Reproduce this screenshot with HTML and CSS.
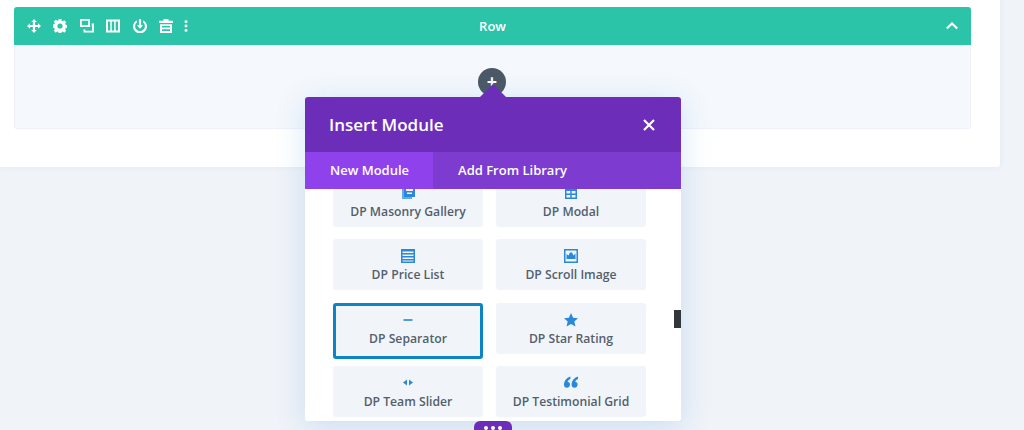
FILE: index.html
```html
<!doctype html>
<html>
<head>
  <meta charset="UTF-8">
  <meta name="viewport" content="width=device-width, initial-scale=1.0">
  <link rel="stylesheet" href="styles.css">
</head>
<body>
  <div class="section">
    <div class="row">
      <div class="row-header">
        <div class="row-tools">
          <svg class="tool" viewBox="1 1 14 14"><path d="M8 1l2.800 3H9.100v2.900H12V5.200L15 8l-3 2.800V9.100H9.100V12h1.700L8 15l-2.800-3h1.700V9.100H4v1.700L1 8l3-2.800v1.700h2.900V4H5.200z"/></svg>
          <svg class="tool" viewBox="0.500 0.500 15 15"><path fill-rule="evenodd" d="M6.600 .5h2.800l.4 2 1.100.5 1.700-1.100 2 2-1.100 1.700.5 1.100 2 .4v2.800l-2 .4-.5 1.100 1.100 1.700-2 2-1.700-1.100-1.100.5-.4 2H6.600l-.4-2-1.100-.5-1.700 1.100-2-2 1.100-1.700-.5-1.100-2-.4V6.600l2-.4.5-1.100-1.100-1.700 2-2 1.700 1.100 1.100-.5zM8 5.200a2.800 2.800 0 1 0 0 5.600 2.800 2.800 0 0 0 0-5.600z"/></svg>
          <svg class="tool" viewBox="1 1 14 14"><path fill-rule="evenodd" d="M1 1h10v8H1zm1.800 1.800v4.400h6.400V2.800z"/><path d="M12.600 5.500H15V14.500H4.500v-3h1.800v1.200h6.900z"/></svg>
          <svg class="tool" viewBox="1 1.500 14 13"><path fill-rule="evenodd" d="M1 1.500h14v13H1zm2 2v9h2.300v-9zm3.800 0v9h2.400v-9zm3.900 0v9H13v-9z"/></svg>
          <svg class="tool" viewBox="1 1 14 14"><path d="M4.800 2.200v2.200a4.900 4.900 0 1 0 6.400 0V2.200a7 7 0 1 1-6.400 0z"/><path d="M6.900 1h2.200v6.300H11L8 10.800 5 7.300h1.900z"/></svg>
          <svg class="tool" viewBox="1 1 14 14"><path fill-rule="evenodd" d="M5.500 1h5v1.800H15v2.200H1V2.800h4.500zM2 6.200h12V15H2zM4 8v1.600h8V8zm0 3.200V13h8v-1.800z"/></svg>
          <svg class="tool tool-dots" viewBox="0 0 4 16"><circle cx="2" cy="3" r="1.700"/><circle cx="2" cy="8" r="1.700"/><circle cx="2" cy="13" r="1.700"/></svg>
        </div>
        <div class="row-title">Row</div>
        <div class="row-actions">
          <svg class="row-toggle" viewBox="0 0 14 9"><path d="M1 7.500l6-6 6 6" fill="none" stroke="#fff" stroke-width="2.400"/></svg>
        </div>
      </div>
      <div class="row-body"></div>
    </div>
  </div>

  <div class="add-btn"><span>+</span></div>

  <div class="modal">
    <div class="modal-caret"></div>
    <div class="modal-header">
      <span class="modal-title">Insert Module</span>
      <svg class="modal-close" viewBox="0 0 12 12"><path d="M1 1l10 10M11 1L1 11" stroke="#fff" stroke-width="2.200"/></svg>
    </div>
    <div class="modal-tabs">
      <div class="tab tab-active">New Module</div>
      <div class="tab">Add From Library</div>
    </div>
    <div class="modal-body">
      <div class="module-grid">
        <div class="module">
          <svg class="module-icon" viewBox="0 0 14 14"><path d="M1 1h2v10h8v2H1z" opacity=".7"/><path fill-rule="evenodd" d="M3 0h11v11H3zm2 1v4h7V1zm1 5.500v1.500h5V6.500z"/></svg>
          <span>DP Masonry Gallery</span>
        </div>
        <div class="module">
          <svg class="module-icon" viewBox="0 0 14 14"><path fill-rule="evenodd" d="M1 1h12v12H1zm1.500 4v2.500h3.800V5zm5.200 0v2.500h3.800V5zM2.500 9v2.500h3.800V9zm5.200 0v2.500h3.800V9z"/></svg>
          <span>DP Modal</span>
        </div>
        <div class="module">
          <svg class="module-icon" viewBox="0 0 14 14"><path fill-rule="evenodd" d="M0 0h14v14H0zm1.500 2.500v1.500h11V2.500zm0 3V7h11V5.500zm0 3V10h11V8.500zm0 3v1h11v-1z"/></svg>
          <span>DP Price List</span>
        </div>
        <div class="module">
          <svg class="module-icon" viewBox="0 0 14 14"><path fill-rule="evenodd" d="M0 0h14v14H0zm1.500 1.500v11h11v-11zM2.500 10V5l2 1.500L6 3.500h2L9.500 6.500l2-2V10z"/></svg>
          <span>DP Scroll Image</span>
        </div>
        <div class="module module-selected">
          <svg class="module-icon" viewBox="0 0 14 14"><path d="M2.500 6.200h9v1.600h-9z"/></svg>
          <span>DP Separator</span>
        </div>
        <div class="module">
          <svg class="module-icon" viewBox="0 0 14 14"><path d="M7 0l2.100 4.700 5.100.5-3.900 3.300 1.200 5L7 10.900l-4.500 2.600 1.200-5L-.2 5.200l5.100-.5z"/></svg>
          <span>DP Star Rating</span>
        </div>
        <div class="module">
          <svg class="module-icon" viewBox="0 0 14 14"><path d="M6 3.500v6L2 6.500zM8 3.500v6l4-3z"/></svg>
          <span>DP Team Slider</span>
        </div>
        <div class="module">
          <svg class="module-icon" viewBox="0 0 14 14"><path d="M6.400 .5C3.200 1.600 0 4.200 0 8.800a3 3 0 1 0 3.600-3C3.900 4.700 5 3.700 6.400 3zM14 .5c-3.200 1.100-6.400 3.700-6.400 8.300a3 3 0 1 0 3.600-3c.3-1.100 1.400-2.100 2.800-2.800z"/></svg>
          <span>DP Testimonial Grid</span>
        </div>
      </div>
    </div>
    <div class="scroll-thumb"></div>
  </div>

  <div class="more-btn"><i></i><i></i><i></i></div>
</body>
</html>
```

FILE: styles.css
```css
html, body {
  margin: 0;
  height: 430px;
  overflow: hidden;
  background-color: #f0f3f8;
  font-family: 'Open Sans', Arial, sans-serif;
  color: #4c5866;
}

.section {
  width: 1000px;
  height: 167px;
  box-sizing: border-box;
  padding: 7px 29px 0 14px;
  background-color: #fff;
  border-bottom-right-radius: 3px;
  box-shadow: 0 0 6px rgba(43, 135, 218, .08);
}

.row-header {
  height: 38px;
  display: grid;
  grid-template-columns: 1fr auto 1fr;
  align-items: center;
  padding: 0 13px;
  background-color: #2bc4a9;
  border-radius: 3px 3px 0 0;
}

.row-tools {
  display: flex;
  align-items: center;
  gap: 12.4px;
}

.tool {
  width: 14px;
  height: 14px;
  fill: #fff;
}

.tool-dots {
  width: 4px;
  margin-left: -1px;
}

.row-title {
  font-size: 13px;
  font-weight: 600;
  color: #fff;
}

.row-actions {
  display: flex;
  justify-content: flex-end;
}

.row-toggle {
  width: 12px;
  height: 8px;
}

.row-body {
  height: 84px;
  box-sizing: border-box;
  background-color: #f5f8fc;
  border: 1px solid #eff1f8;
  border-top: 0;
  border-radius: 0 0 3px 3px;
}

.add-btn {
  position: absolute;
  left: 478px;
  top: 68px;
  width: 28px;
  height: 28px;
  border-radius: 50%;
  background-color: #4c5866;
  color: #fff;
  font-size: 18px;
  font-weight: 700;
  line-height: 27px;
  text-align: center;
}

.modal {
  position: absolute;
  left: 305px;
  top: 97px;
  width: 376px;
  height: 324px;
  background-color: #fff;
  border-radius: 3px;
  box-shadow: 0 5px 30px rgba(43, 135, 218, .2);
}

.modal-caret {
  position: absolute;
  left: 175px;
  top: -13px;
  border-left: 13px solid transparent;
  border-right: 13px solid transparent;
  border-bottom: 13px solid #6c2eb9;
}

.modal-header {
  height: 55px;
  display: flex;
  align-items: center;
  justify-content: space-between;
  padding: 0 26px 0 24px;
  background-color: #6c2eb9;
  border-radius: 3px 3px 0 0;
  color: #fff;
}

.modal-title {
  font-size: 17px;
  font-weight: 600;
}

.modal-close {
  width: 12px;
  height: 12px;
}

.modal-tabs {
  height: 37px;
  display: flex;
  background-color: #7e3bd0;
}

.tab {
  padding: 0 24px 0 25px;
  font-size: 13px;
  font-weight: 600;
  line-height: 37px;
  color: #fff;
}

.tab-active {
  background-color: #8f42ec;
}

.modal-body {
  height: 232px;
  overflow: hidden;
}

.module-grid {
  display: grid;
  grid-template-columns: 150px 150px;
  grid-auto-rows: 51px;
  column-gap: 13px;
  row-gap: 12.5px;
  align-items: start;
  margin: -13.25px 0 0 28px;
}

.module {
  height: 51px;
  box-sizing: border-box;
  padding-top: 10px;
  display: flex;
  flex-direction: column;
  align-items: center;
  background-color: #f1f5f9;
  border-radius: 3px;
  font-size: 12.2px;
  font-weight: 600;
  line-height: 17px;
  color: #535f6d;
}

.module-selected {
  height: 56px;
  padding-top: 7px;
  border: 3px solid #0c84c5;
}

.module-icon {
  width: 14px;
  height: 14px;
  fill: #2b87da;
  margin-bottom: 3px;
  flex: none;
}

.scroll-thumb {
  position: absolute;
  right: 0;
  top: 213px;
  width: 7px;
  height: 18px;
  background-color: #32373c;
}

.more-btn {
  position: absolute;
  left: 474px;
  top: 421px;
  width: 38px;
  height: 20px;
  display: flex;
  justify-content: center;
  gap: 3px;
  padding-top: 5px;
  box-sizing: border-box;
  background-color: #6c2eb9;
  border-radius: 6px;
}

.more-btn i {
  width: 4px;
  height: 4px;
  border-radius: 50%;
  background-color: #fff;
}
```
